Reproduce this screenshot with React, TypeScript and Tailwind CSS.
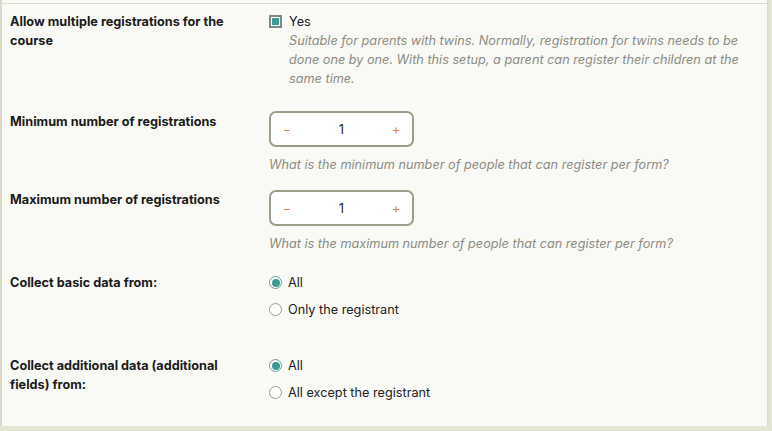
import React, { useState } from "react";

const font = { fontFamily: "Inter, 'Noto Sans', sans-serif" };

function Stepper({ value, onChange }: { value: number; onChange: (v: number) => void }) {
  return (
    <div className="flex h-[36px] w-[145px] items-center rounded-[7px] border-2 border-[#9c9d8b] bg-white">
      <button
        onClick={() => onChange(Math.max(1, value - 1))}
        className="flex h-full w-[32px] items-center justify-center text-[12px] text-[#ee7a48]"
      >
        −
      </button>
      <span className="flex-1 text-center text-[13px] text-[#1e2a5a]">{value}</span>
      <button
        onClick={() => onChange(value + 1)}
        className="flex h-full w-[32px] items-center justify-center text-[13px] text-[#ee7a48]"
      >
        +
      </button>
    </div>
  );
}

function Radio({ checked, label, onClick }: { checked: boolean; label: string; onClick: () => void }) {
  return (
    <label onClick={onClick} className="flex h-[19px] cursor-pointer items-center gap-[6px] text-[#222]">
      {checked ? (
        <span className="flex h-[13px] w-[13px] items-center justify-center rounded-full border-[1.5px] border-[#6f9c96] bg-white">
          <span className="h-[8px] w-[8px] rounded-full bg-[#3a9d95]" />
        </span>
      ) : (
        <span className="h-[13px] w-[13px] rounded-full border-[1.5px] border-[#9a9b90] bg-white" />
      )}
      <span>{label}</span>
    </label>
  );
}

export default function App() {
  const [multi, setMulti] = useState(true);
  const [min, setMin] = useState(1);
  const [max, setMax] = useState(1);
  const [basic, setBasic] = useState("all");
  const [extra, setExtra] = useState("all");

  return (
    <div className="h-[431px] w-[772px] bg-[#e3e6d3]" style={font}>
      <div className="h-[426px] w-[769px] border-l-2 border-r-2 border-[#d9dbca] bg-[#f9faf5] pt-[3px]">
        <div className="grid grid-cols-[259px_1fr] border-t border-[#dcdccd] pl-[8px] pt-[8px] text-[12.7px] leading-[19px]">
          {/* multiple registrations */}
          <div className="font-bold text-[#1b1b1b]">Allow multiple registrations for the course</div>
          <div className="pr-[24px]">
            <label onClick={() => setMulti(!multi)} className="flex cursor-pointer items-center gap-[7px] text-[#222]">
              <span className="flex h-[13px] w-[13px] items-center justify-center border-2 border-[#7c8b82] bg-white">
                {multi && <span className="h-[7px] w-[7px] bg-[#3a9d95]" />}
              </span>
              Yes
            </label>
            <p className="pl-[20px] italic text-[#8c8c84]">
              Suitable for parents with twins. Normally, registration for twins needs to be done one by one. With this
              setup, a parent can register their children at the same time.
            </p>
          </div>

          {/* minimum */}
          <div className="mt-[24px] font-bold text-[#1b1b1b]">Minimum number of registrations</div>
          <div className="mt-[23px]">
            <Stepper value={min} onChange={setMin} />
            <p className="mt-[8px] italic text-[#8c8c84]">What is the minimum number of people that can register per form?</p>
          </div>

          {/* maximum */}
          <div className="mt-[16px] font-bold text-[#1b1b1b]">Maximum number of registrations</div>
          <div className="mt-[16px]">
            <Stepper value={max} onChange={setMax} />
            <p className="mt-[8px] italic text-[#8c8c84]">What is the maximum number of people that can register per form?</p>
          </div>

          {/* basic data */}
          <div className="mt-[20px] font-bold text-[#1b1b1b]">Collect basic data from:</div>
          <div className="mt-[20px] flex flex-col gap-[8px]">
            <Radio checked={basic === "all"} label="All" onClick={() => setBasic("all")} />
            <Radio checked={basic === "reg"} label="Only the registrant" onClick={() => setBasic("reg")} />
          </div>

          {/* additional data */}
          <div className="mt-[37px] pr-[20px] font-bold text-[#1b1b1b]">Collect additional data (additional fields) from:</div>
          <div className="mt-[37px] flex flex-col gap-[8px]">
            <Radio checked={extra === "all"} label="All" onClick={() => setExtra("all")} />
            <Radio checked={extra === "except"} label="All except the registrant" onClick={() => setExtra("except")} />
          </div>
        </div>
      </div>
    </div>
  );
}
